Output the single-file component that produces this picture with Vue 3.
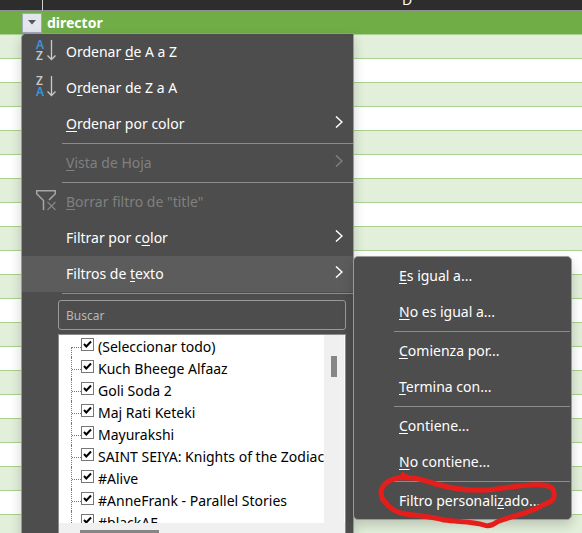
<script setup>
import { ref } from 'vue'

const rowCount = 24
const search = ref('')

// Labels are split around the underlined access key: [before, key, after]
const textFilters = [
  [['', 'E', 's igual a...'], ['', 'N', 'o es igual a...']],
  [['', 'C', 'omienza por...'], ['', 'T', 'ermina con...']],
  [['', 'C', 'ontiene...'], ['', 'N', 'o contiene...']],
  [['Filtro personali', 'z', 'ado...']],
]

const values = ref([
  '(Seleccionar todo)',
  'Kuch Bheege Alfaaz',
  'Goli Soda 2',
  'Maj Rati Keteki',
  'Mayurakshi',
  'SAINT SEIYA: Knights of the Zodiac',
  '#Alive',
  '#AnneFrank - Parallel Stories',
  '#blackAF',
].map((name) => ({ name, checked: true })))
</script>

<template>
  <main class="page">
    <table class="sheet">
      <thead>
        <tr class="letters">
          <th class="edge"></th>
          <th><div class="letter">D</div></th>
        </tr>
        <tr class="titles">
          <th class="edge">
            <button class="drop" type="button" aria-label="Filtro">
              <svg width="8" height="5" viewBox="0 0 8 5"><path d="M0 0H8L4 4.5Z" fill="#555" /></svg>
            </button>
          </th>
          <th class="title">director</th>
        </tr>
      </thead>
      <tbody>
        <tr v-for="n in rowCount" :key="n"><td></td><td></td></tr>
      </tbody>
    </table>

    <div class="menu main-menu">
      <button class="item" type="button">
        <svg class="icon" width="20" height="20" viewBox="0 0 20 20">
          <text class="glyph blue" x="0" y="9">A</text>
          <text class="glyph" x="0" y="20">Z</text>
          <path class="arrow" d="M15.5 0V19.5M11.5 15.5L15.5 19.5L19.5 15.5" />
        </svg>
        <span class="label">Ordenar <u>d</u>e A a Z</span>
      </button>
      <button class="item" type="button">
        <svg class="icon" width="20" height="20" viewBox="0 0 20 20">
          <text class="glyph" x="0" y="9">Z</text>
          <text class="glyph blue" x="0" y="20">A</text>
          <path class="arrow" d="M15.5 0V19.5M11.5 15.5L15.5 19.5L19.5 15.5" />
        </svg>
        <span class="label">O<u>r</u>denar de Z a A</span>
      </button>
      <button class="item" type="button">
        <span class="icon"></span>
        <span class="label"><u>O</u>rdenar por color</span>
        <svg class="chevron" width="8" height="12" viewBox="0 0 8 12"><path d="M1 .5L7 6L1 11.5" /></svg>
      </button>
      <hr />
      <button class="item" type="button" disabled>
        <span class="icon"></span>
        <span class="label"><u>V</u>ista de Hoja</span>
        <svg class="chevron" width="8" height="12" viewBox="0 0 8 12"><path d="M1 .5L7 6L1 11.5" /></svg>
      </button>
      <hr />
      <button class="item" type="button" disabled>
        <svg class="icon" width="20" height="20" viewBox="0 0 20 20">
          <path class="funnel" d="M7.5 20V10.5L.7 3.7V.7H19.3V3.7L13 10" />
          <path class="cross" d="M11.5 12L19.5 20M19.5 12L11.5 20" />
        </svg>
        <span class="label"><u>B</u>orrar filtro de "title"</span>
      </button>
      <button class="item" type="button">
        <span class="icon"></span>
        <span class="label">Filtrar por c<u>o</u>lor</span>
        <svg class="chevron" width="8" height="12" viewBox="0 0 8 12"><path d="M1 .5L7 6L1 11.5" /></svg>
      </button>
      <div class="parent">
        <button class="item open" type="button">
          <span class="icon"></span>
          <span class="label">Filtros de <u>t</u>exto</span>
          <svg class="chevron" width="8" height="12" viewBox="0 0 8 12"><path d="M1 .5L7 6L1 11.5" /></svg>
        </button>
        <div class="menu sub-menu">
          <template v-for="(group, g) in textFilters" :key="g">
            <hr v-if="g" />
            <button v-for="part in group" :key="part.join('')" class="item" type="button">
              <span class="icon"></span>
              <span class="label">{{ part[0] }}<u>{{ part[1] }}</u>{{ part[2] }}</span>
            </button>
          </template>
          <svg class="mark" width="184" height="64" viewBox="376 468 184 64">
            <path d="M403 475L408 478C399 477 391 479 386 483C379 489 380 497 385 502C389 507 393 511 401 513C414 516 430 516 444 520C458 522 472 521 484 525C489 527 493 525 497 522C511 516 527 514 541 506C547 503 553 502 554 497C555 489 552 486 543 485C523 483 507 489 487 490C468 491 449 488 436 484C426 481 418 477 408 478" />
          </svg>
        </div>
      </div>
      <hr />
      <div class="picker">
        <input v-model="search" class="search" type="text" placeholder="Buscar" aria-label="Buscar" />
        <div class="list">
          <div class="viewport">
            <label v-for="value in values" :key="value.name" class="value">
              <span class="branch"></span>
              <span class="check">
                <input v-model="value.checked" type="checkbox" />
                <svg v-if="value.checked" width="13" height="13" viewBox="0 0 13 13">
                  <path d="M3 6L5.3 8.5L10 3.5" />
                </svg>
              </span>
              <span>{{ value.name }}</span>
            </label>
          </div>
          <div class="track-y"><div class="thumb-y"></div></div>
          <div class="track-x"><div class="thumb-x"></div></div>
        </div>
      </div>
    </div>
  </main>
</template>

<style>
body {
  margin: 0;
}
</style>

<style scoped>
.page {
  position: relative;
  height: 100vh;
  overflow: hidden;
  background: #fff;
  font-family: "Noto Sans", "Open Sans", sans-serif;
  font-size: 14px;
}

.sheet {
  width: 100%;
  min-width: 771px;
  table-layout: fixed;
  border-collapse: separate;
  border-spacing: 0;
}
th,
td {
  box-sizing: border-box;
  padding: 0;
}
.edge {
  width: 43px;
}
.letters th {
  height: 11px;
  background: #2d2d2d;
  border-bottom: 1px solid #8f8f8f;
  color: #fff;
  font-weight: 400;
}
.letters .edge {
  border-right: 1px solid #d0d0d0;
}
.letter {
  display: flex;
  align-items: flex-end;
  justify-content: center;
  height: 10px;
  overflow: hidden;
  line-height: 20px;
}
.titles th {
  height: 24px;
  background: #70ad47;
  border-bottom: 1px solid #a9d08e;
}
.titles .title {
  padding-left: 4px;
  color: #fff;
  text-align: left;
  line-height: 22px;
}
.drop {
  display: flex;
  align-items: center;
  justify-content: center;
  box-sizing: border-box;
  width: 20px;
  height: 20px;
  margin-left: 22px;
  padding: 0;
  border: 1px solid #a3a7b5;
  background: #e3e6ee;
}
tbody td {
  height: 24px;
  border-bottom: 1px solid #a9d08e;
}
tbody tr:nth-child(odd) {
  background: #e2efda;
}

.menu {
  position: absolute;
  box-sizing: border-box;
  border: 1px solid #9a9a9a;
  background: #4d4d4d;
  box-shadow: 0 5px 12px rgba(0, 0, 0, 0.18);
}
.main-menu {
  top: 33px;
  left: 21px;
  width: 333px;
  border-radius: 5px 0 0 0;
}
.sub-menu {
  top: 0;
  left: 100%;
  width: 219px;
  padding-top: 1px;
  border-radius: 5px;
}
.parent {
  position: relative;
}
.item {
  display: flex;
  align-items: center;
  box-sizing: border-box;
  width: 100%;
  height: 36px;
  padding: 0 10px 0 14px;
  border: 0;
  background: none;
  color: #fff;
  font: inherit;
  text-align: left;
}
.item:disabled {
  color: #808080;
}
.open {
  background: #5c5c5c;
}
.icon {
  flex: none;
  width: 20px;
  margin-right: 10px;
  overflow: visible;
}
.icon,
.chevron {
  margin-bottom: 4px;
}
.label {
  flex: 1;
  line-height: 20px;
  white-space: nowrap;
}
u {
  text-decoration-thickness: 1px;
  text-underline-offset: 2px;
  text-decoration-skip-ink: none;
}
.glyph {
  fill: #c8c8c8;
  font-size: 12px;
  font-weight: 600;
}
.glyph.blue {
  fill: #3a96dd;
}
.arrow,
.funnel,
.cross,
.chevron path {
  fill: none;
  stroke: #c8c8c8;
}
.arrow {
  stroke-width: 1.3;
}
.funnel {
  stroke: #a6a6a6;
  stroke-width: 1.5;
}
.cross {
  stroke: #858585;
  stroke-width: 1.2;
}
.chevron path {
  stroke: currentColor;
  stroke-width: 1.5;
}
hr {
  height: 1px;
  margin: 1px 0 1px 40px;
  border: 0;
  background: #8c8c8c;
}
.sub-menu .item {
  padding-left: 15px;
}
.sub-menu hr {
  margin-right: 1px;
}
.mark {
  position: absolute;
  left: 22px;
  top: 211px;
  overflow: visible;
  pointer-events: none;
}
.mark path {
  fill: none;
  stroke: #e61e1b;
  stroke-width: 5;
  stroke-linecap: round;
  stroke-linejoin: round;
}

.picker {
  display: grid;
  gap: 4px;
  padding: 5px 7px 12px 36px;
}
.search {
  box-sizing: border-box;
  width: 100%;
  height: 30px;
  padding: 0 7px;
  border: 1px solid #999;
  border-radius: 3px;
  background: transparent;
  color: #fff;
  font: inherit;
  font-size: 12px;
}
.search::placeholder {
  color: #b8b8b8;
  opacity: 1;
}
.list {
  display: grid;
  grid-template-columns: 1fr 21px;
  grid-template-rows: 188px 20px;
  border: 1px solid #8c8c8c;
  background: #f0f0f0;
  color: #000;
}
.viewport {
  overflow: hidden;
  padding-left: 12px;
  background: #fff;
}
.value {
  display: flex;
  align-items: center;
  height: 22px;
  line-height: 24px;
  white-space: nowrap;
}
.branch {
  flex: none;
  box-sizing: border-box;
  width: 10px;
  height: 22px;
  border-left: 1px dotted #777;
  background: repeating-linear-gradient(90deg, #777 0 1px, transparent 1px 2px) 0 12px / 100% 1px no-repeat;
}
.value:first-child .branch {
  height: 10px;
  margin-top: 12px;
  background-position: 0 0;
}
.check {
  display: grid;
  flex: none;
  margin: 0 4px 4px 0;
}
.check > * {
  grid-area: 1 / 1;
}
.check input {
  appearance: none;
  box-sizing: border-box;
  width: 13px;
  height: 13px;
  margin: 0;
  border: 1px solid #777;
  background: #fff;
}
.check svg {
  position: relative;
  pointer-events: none;
}
.check path {
  fill: none;
  stroke: #000;
  stroke-width: 2;
}
.value > span:last-child {
  padding-top: 2px;
}
.track-y {
  border-right: 1px solid #fff;
}
.thumb-y {
  width: 6px;
  height: 21px;
  margin: 21px 0 0 7px;
  background: #868686;
}
.track-x {
  grid-column: 1 / -1;
}
.thumb-x {
  width: 79px;
  height: 6px;
  margin: 7px 0 0 21px;
  background: #868686;
}
</style>
